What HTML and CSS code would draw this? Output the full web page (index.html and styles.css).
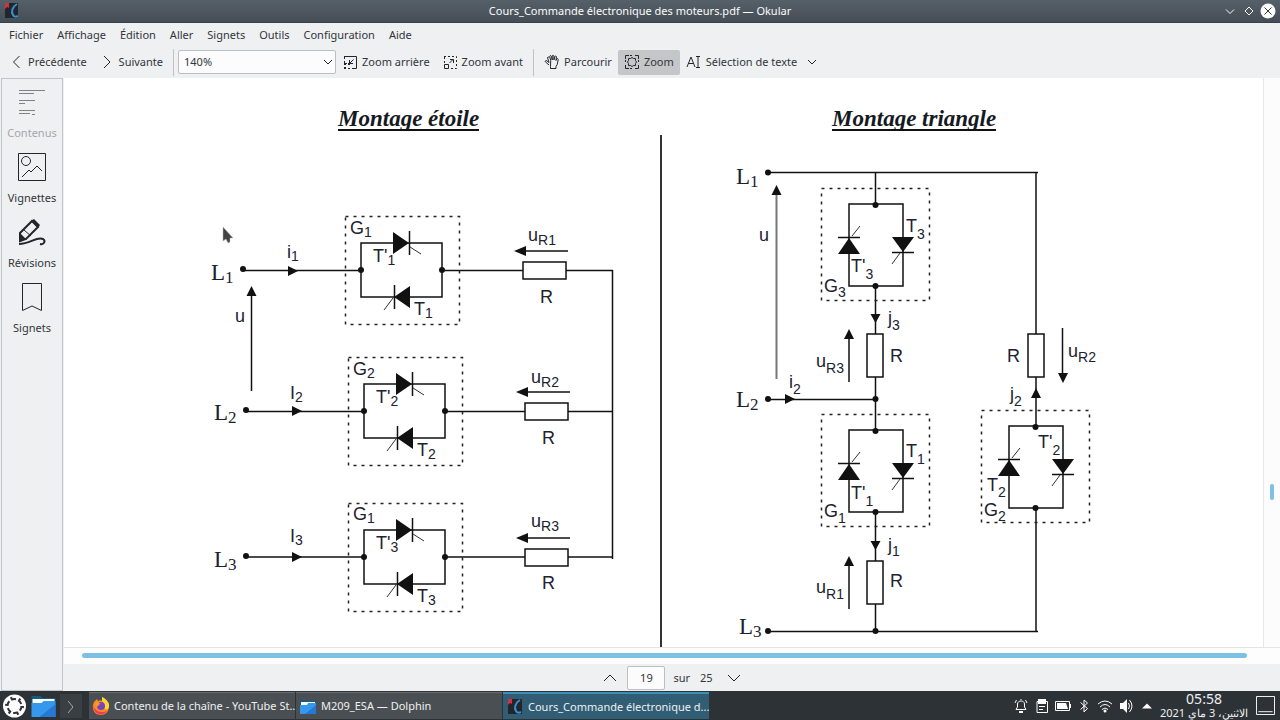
FILE: index.html
```html
<!DOCTYPE html>
<html lang="fr">
<head>
<meta charset="utf-8">
<title>Cours_Commande électronique des moteurs.pdf — Okular</title>
<link rel="stylesheet" href="styles.css">
</head>
<body>
<header class="titlebar">
  <svg class="app-icon" viewBox="0 0 16 16"><rect x="1" width="13" height="15" fill="#22262b"/><path d="M1 0h4v5L3 4 1 6z" fill="#d32f45"/><path d="M13 1c-5 3-6 8-4 11 1 2 3 2 5 1" fill="none" stroke="#3b8fd6" stroke-width="2"/></svg>
  <h1 class="window-title">Cours_Commande électronique des moteurs.pdf — Okular</h1>
  <div class="window-buttons">
    <button aria-label="Réduire"><svg viewBox="0 0 16 16"><path d="M4 6.500l4 4 4-4" class="light"/></svg></button>
    <button aria-label="Maximiser"><svg viewBox="0 0 16 16"><path d="M8 4l4 4-4 4-4-4z" class="light"/></svg></button>
    <button aria-label="Fermer"><svg viewBox="0 0 16 16"><circle cx="8" cy="8" r="7.500" fill="#fcfcfc"/><path d="M4.500 4.500l7 7m0-7l-7 7" class="dark"/></svg></button>
  </div>
</header>

<nav class="menubar">
  <button>Fichier</button><button>Affichage</button><button>Édition</button><button>Aller</button><button>Signets</button><button>Outils</button><button>Configuration</button><button>Aide</button>
</nav>

<div class="toolbar">
  <button class="tool"><svg viewBox="0 0 16 16"><path d="M11.500 2L5.500 8l6 6" class="line"/></svg>Précédente</button>
  <button class="tool"><svg viewBox="0 0 16 16"><path d="M5 2l6 6-6 6" class="line"/></svg>Suivante</button>
  <span class="separator"></span>
  <div class="zoom-field">
    <select aria-label="Niveau de zoom"><option>140%</option></select>
    <svg viewBox="0 0 10 10"><path d="M1 3l4 4 4-4" class="line"/></svg>
  </div>
  <button class="tool"><svg viewBox="0 0 16 16"><path d="M2 2.500h12.500v12H10" class="line"/><path d="M2.500 3v6M3 9.500h4M2 14.500h7" class="line dots"/><path d="M2 9h2v2H2zM6 9h2v2H6zM2 13h2v2H2z" fill="#232629"/><path d="M11.500 5.500L8 9M7.500 6v3.500H11" class="line"/></svg>Zoom arrière</button>
  <button class="tool"><svg viewBox="0 0 16 16"><path d="M2 2.500h12.500v12H8M2.500 3v6" class="line dots"/><path d="M2.500 10.500h4v4h-4zM7.500 9l3.500-3.500M8 5.500h3.500V9" class="line"/></svg>Zoom avant</button>
  <span class="separator"></span>
  <button class="tool"><svg viewBox="0 0 16 16"><path d="M5 11L1.500 8c-.8-1 .4-1.800 1.300-1.200L5 8.500 3.600 4c-.2-1.300 1.200-1.500 1.600-.4M6.700 6.500L5.700 2.600c0-1.200 1.500-1.300 1.800-.2l.7 3.600V2c.2-1 1.500-1 1.700 0v4l1-3.400c.4-1 1.600-.7 1.500.4L12 6.500l.7-1.500c.6-.9 1.700-.4 1.500.6l-1 5-1.200 1.900v2H6.500v-2z" class="line"/></svg>Parcourir</button>
  <button class="tool active"><svg viewBox="0 0 16 16"><path d="M1.500 5V1.500H5M11 1.500h3.500V5M14.500 11v3.500H11M5 14.500H1.500V11" class="line"/><path d="M1.500 6v4M14.500 6v4M6 1.500h4M6 14.500h4" class="line dots"/><path d="M4.500 4.500h2L8 3.500l1.500 1h2v2l1 1.500-1 1.500v2h-2L8 12.500l-1.500-1h-2v-2L3.500 8l1-1.500z" class="line"/></svg>Zoom</button>
  <button class="tool"><svg viewBox="0 0 16 16"><path d="M1 13L5 3l4 10M2.500 9.500h5M10 2.500h4M12 2.500v11M10 13.500h4" class="line"/></svg>Sélection de texte</button>
  <button class="drop" aria-label="Autres outils de sélection"><svg viewBox="0 0 10 10"><path d="M1 3l4 4 4-4" class="line"/></svg></button>
</div>

<main class="workspace">
  <aside class="sidebar">
    <button disabled><svg viewBox="0 0 32 32"><path d="M3 4.500h26M3 7.500h15M3 14.500h16M3 17.500h6M3 24.500h16M3 27.500h11M16 28.500h3" class="line muted"/></svg>Contenus</button>
    <button><svg viewBox="0 0 32 32"><path d="M2.500 2.500h27v27h-27zM6 26l7-7 2 2 6-6 5 5" class="line"/><circle cx="10" cy="10" r="4.500" class="line"/></svg>Vignettes</button>
    <button><svg viewBox="0 0 32 32"><path d="M4 25v-8L16 5l6 6-12 12z" fill="none" stroke="#232629" stroke-width="2"/><path d="M4 17l7 7H3zM15 5l3-2 6 6-2 3z" fill="#232629"/><path d="M8 14l7 6" class="line"/><path d="M3 28c11 0 18-8 24-5 3 2 1 6-3 5" fill="none" stroke="#232629" stroke-width="2"/></svg>Révisions</button>
    <button><svg viewBox="0 0 32 32"><path d="M6.500 2.500h19v27L16 25l-9.500 4.500z" class="line"/></svg>Signets</button>
  </aside>

  <section class="viewer">
    <div class="page-area">
      <svg class="diagram" viewBox="64 78 1199 569" preserveAspectRatio="xMidYMin meet" role="img" aria-label="Montages étoile et triangle">
        <defs>
          <g id="gate-h">
            <rect x=".5" y=".5" width="114" height="108" class="dash"/>
            <path d="M16 27H97V81H16z" class="wire"/>
            <circle cx="16" cy="54" r="3"/><circle cx="97" cy="54" r="3"/>
            <path d="M48 16V38L64 27zM65 70V92L49 81z"/>
            <path d="M64.500 15V39M49.500 69V93" class="wire"/>
            <path d="M65 31l11 7M48 82l-9 12" class="thin"/>
          </g>
          <g id="gate-v">
            <rect x=".5" y=".5" width="108" height="112" class="dash"/>
            <path d="M28 16H82V98H28z" class="wire"/>
            <circle cx="54.500" cy="17" r="3"/><circle cx="54.500" cy="98" r="3"/>
            <path d="M17 66H39L28 50zM71 49H93L82 64z"/>
            <path d="M17 49.500H39M71 64.500H93" class="wire"/>
            <path d="M31 48l8-10M79 65l-8 11" class="thin"/>
          </g>
          <g id="load-h">
            <rect x="9" y="21" width="43" height="17" class="box"/>
            <path d="M8 10H54" class="wire"/><path d="M0 10l12-5v10z"/>
          </g>
          <rect id="load-v" width="16" height="43" class="box"/>
          <path id="up" d="M0 0l5 10h-10z"/>
          <path id="right" d="M0 0l-10-5v10z"/>
        </defs>

        <text x="338" y="126" class="heading">Montage étoile</text>
        <text x="832" y="126" class="heading">Montage triangle</text>
        <path d="M338 130H479M832 130H996" class="rule"/>
        <path d="M661 135V647" class="divider"/>

        <path d="M243 270.500H361M442 270.500H523M566 270.500H613M246 411.500H364M445 411.500H525M568 411.500H613M246 557H364M445 557H525M568 557H613M612.500 270V559" class="wire"/>
        <circle cx="243" cy="269" r="3"/><circle cx="246" cy="410" r="3"/><circle cx="246" cy="556" r="3"/>
        <use href="#right" x="298" y="271"/><use href="#right" x="302" y="411"/><use href="#right" x="302" y="557"/>
        <path d="M251.500 391V294" class="wire"/><use href="#up" x="251.500" y="286"/>
        <use href="#gate-h" x="345" y="216"/><use href="#gate-h" x="348" y="357"/><use href="#gate-h" x="348" y="503"/>
        <use href="#load-h" x="514" y="241"/><use href="#load-h" x="516" y="382"/><use href="#load-h" x="516" y="528"/>

        <g class="node">
          <text x="211" y="280">L<tspan dy="3">1</tspan></text>
          <text x="214" y="420">L<tspan dy="3">2</tspan></text>
          <text x="214" y="567">L<tspan dy="3">3</tspan></text>
          <text x="736" y="184">L<tspan dy="3">1</tspan></text>
          <text x="736" y="407">L<tspan dy="3">2</tspan></text>
          <text x="739" y="634">L<tspan dy="3">3</tspan></text>
        </g>
        <g class="label">
          <text x="287" y="258">i<tspan dy="3">1</tspan></text>
          <text x="290" y="399">I<tspan dy="3">2</tspan></text>
          <text x="290" y="542">I<tspan dy="3">3</tspan></text>
          <text x="235" y="322">u</text>
          <text x="350" y="234">G<tspan dy="3">1</tspan></text>
          <text x="353" y="375">G<tspan dy="3">2</tspan></text>
          <text x="353" y="520">G<tspan dy="3">1</tspan></text>
          <text x="373" y="262">T'<tspan dy="3">1</tspan></text>
          <text x="376" y="403">T'<tspan dy="3">2</tspan></text>
          <text x="376" y="549">T'<tspan dy="3">3</tspan></text>
          <text x="414" y="315">T<tspan dy="3">1</tspan></text>
          <text x="417" y="456">T<tspan dy="3">2</tspan></text>
          <text x="417" y="602">T<tspan dy="3">3</tspan></text>
          <text x="528" y="241">u<tspan dy="4">R1</tspan></text>
          <text x="531" y="383">u<tspan dy="4">R2</tspan></text>
          <text x="531" y="527">u<tspan dy="4">R3</tspan></text>
          <text x="540" y="303">R</text><text x="542" y="444">R</text><text x="542" y="589">R</text>
        </g>

        <path d="M768 172.500H1038M875.500 172V205M875.500 286V334M875.500 377V431M875.500 512V561M875.500 604V631M768 399.500H876M768 631.500H1038M1036 172V334M1036 377V427M1036 507V631" class="wire"/>
        <circle cx="768" cy="172.500" r="3"/><circle cx="768" cy="399" r="3"/><circle cx="768" cy="631" r="3"/>
        <circle cx="875.500" cy="399" r="3"/><circle cx="875.500" cy="631" r="3"/>
        <path d="M776.500 379V194" class="soft"/><use href="#up" x="776.500" y="185"/>
        <use href="#right" x="795" y="399"/>
        <use href="#gate-v" x="821" y="188"/><use href="#gate-v" x="821" y="414"/><use href="#gate-v" x="981" y="410"/>
        <use href="#load-v" x="867" y="334"/><use href="#load-v" x="867" y="561"/><use href="#load-v" x="1028" y="334"/>
        <path d="M849 382V338M849 609V565M1062.500 328V374" class="wire"/>
        <use href="#up" x="849" y="329"/><use href="#up" x="849" y="556"/><use href="#up" x="1036" y="388"/>
        <path d="M1063 383l5-10h-10zM875.500 323l5-9h-10zM875.500 550l5-9h-10z"/>
        <g class="label">
          <text x="759" y="241">u</text>
          <text x="906" y="232">T<tspan dy="7">3</tspan></text>
          <text x="851" y="272">T'<tspan dy="7">3</tspan></text>
          <text x="824" y="292">G<tspan dy="5">3</tspan></text>
          <text x="888" y="324">j<tspan dy="6">3</tspan></text>
          <text x="890" y="362">R</text>
          <text x="816" y="367">u<tspan dy="6">R3</tspan></text>
          <text x="789" y="388">i<tspan dy="6">2</tspan></text>
          <text x="906" y="457">T<tspan dy="7">1</tspan></text>
          <text x="851" y="499">T'<tspan dy="7">1</tspan></text>
          <text x="824" y="517">G<tspan dy="6">1</tspan></text>
          <text x="888" y="551">j<tspan dy="5">1</tspan></text>
          <text x="890" y="587">R</text>
          <text x="816" y="593">u<tspan dy="6">R1</tspan></text>
          <text x="1007" y="362">R</text>
          <text x="1068" y="357">u<tspan dy="5">R2</tspan></text>
          <text x="1010" y="400">j<tspan dy="6">2</tspan></text>
          <text x="1038" y="448">T'<tspan dy="7">2</tspan></text>
          <text x="987" y="491">T<tspan dy="6">2</tspan></text>
          <text x="984" y="516">G<tspan dy="5">2</tspan></text>
        </g>
        <path d="M223 227v14l3-2 2 4 2-1v-4h3z" fill="#444" stroke="#bbb" stroke-width=".5"/>
      </svg>
      <div class="v-scroll"><span class="v-thumb"></span></div>
    </div>
    <div class="h-scroll"><span class="h-thumb"></span></div>
    <div class="pagebar">
      <button aria-label="Page précédente"><svg viewBox="0 0 14 14"><path d="M1 10l6-6 6 6" class="line"/></svg></button>
      <input type="text" value="19" aria-label="Page">
      <span>sur</span>
      <span class="total">25</span>
      <button aria-label="Page suivante"><svg viewBox="0 0 14 14"><path d="M1 4l6 6 6-6" class="line"/></svg></button>
    </div>
  </section>
</main>

<footer class="taskbar">
  <button class="launcher" aria-label="Menu des applications"><svg viewBox="0 0 24 24"><circle cx="12" cy="12" r="11.500" fill="#fcfcfc"/><circle cx="12" cy="12" r="7" fill="none" stroke="#2d3236" stroke-width="2" stroke-dasharray="5 2.330"/><circle cx="12" cy="12" r="8.500" fill="none" stroke="#2d3236" stroke-width="2" stroke-dasharray="2 6.900"/></svg></button>
  <button class="launcher" aria-label="Fichiers"><svg viewBox="0 0 24 24"><path d="M0 2h9l2 2h13v8H0z" fill="#145a83"/><path d="M1 5h22v7H1z" fill="#fff"/><path d="M0 9h10l2-2h12v16H0z" fill="#3698ec"/><path d="M24 10v13H8z" fill="#2778d2"/></svg></button>
  <button class="expander" aria-label="Plus de lanceurs"><svg viewBox="0 0 16 16"><path d="M5 3l5 6-5 6" class="light"/></svg></button>
  <div class="tasks">
    <button class="task"><svg viewBox="0 0 18 18"><path d="M2 5l3-3 1 2c2-1 3-1 4 0V0c4 2 7 5 7 9 0 5-3 9-8 9-6 0-9-5-8-10z" fill="#ff8a20"/><path d="M10 0c4 2 8 6 7 10-1 3-3 3-5 1 1-4-1-6-2-7z" fill="#ffd33b"/><path d="M1 8c2 7 8 8 14 6-3 5-13 6-14-6z" fill="#ef3b5c"/><circle cx="9" cy="9" r="4" fill="#7742bd"/><path d="M3 6c3-1 4 0 6 1-2 0-3 1-3 3z" fill="#ff9b22"/></svg><span>Contenu de la chaîne - YouTube St...</span></button>
    <button class="task"><svg viewBox="0 0 18 18"><path d="M1 3h7l1 1h8v5H1z" fill="#145a83"/><path d="M2 5h14v5H2z" fill="#fff"/><path d="M1 8h7l1-2h8v11H1z" fill="#3698ec"/><path d="M17 8v9H6z" fill="#2778d2"/></svg><span>M209_ESA — Dolphin</span></button>
    <button class="task current"><svg viewBox="0 0 18 18"><rect x="2" y="1" width="14" height="15" fill="#22262b"/><path d="M2 1h4v5L4 5 2 7z" fill="#d32f45"/><path d="M14 2c-5 3-6 8-4 11 1 2 3 2 5 1" fill="none" stroke="#3b8fd6" stroke-width="2"/></svg><span>Cours_Commande électronique d...</span></button>
  </div>
  <div class="tray">
    <button aria-label="Notifications"><svg viewBox="0 0 16 16"><path d="M3 11.500h10L11.500 9V6c0-4-7-4-7 0v3zM3.500 2L2 5M12.500 2L14 5M8 2V1" class="light"/><path d="M6 13h4v2H6z" fill="#fcfcfc"/></svg></button>
    <button aria-label="Presse-papiers"><svg viewBox="0 0 16 16"><path d="M3 3.500h10.500v11H3zM5 8.500h6M5 11.500h4" class="light"/><path d="M4 1h8v5H4z" fill="#fcfcfc"/></svg></button>
    <button aria-label="Batterie"><svg viewBox="0 0 16 16"><path d="M.5 3.500h14v9H.5z" class="light"/><path d="M2 5h9l2 6H2zM15 6h1v4h-1z" fill="#fcfcfc"/></svg></button>
    <button aria-label="Bluetooth"><svg viewBox="0 0 16 16"><path d="M4.500 4.500l7 6L8 14V2l3.500 3-7 6.500" class="light"/></svg></button>
    <button aria-label="Réseau"><svg viewBox="0 0 16 16"><path d="M1 6q7-6 14 0M3 9q5-5 10 0M5 11.500q3-3 6 0" class="light"/><circle cx="8" cy="13" r="1.500" fill="#fcfcfc"/></svg></button>
    <button aria-label="Volume"><svg viewBox="0 0 16 16"><path d="M2 5h3l4-4v14l-4-4H2z" fill="#fcfcfc"/><path d="M10.500 5q2 3 0 6M11.500 2q5 6 0 12" class="light"/></svg></button>
    <button aria-label="Éléments cachés"><svg viewBox="0 0 16 16"><path d="M3 10.500l5-5 5 5z" fill="#fcfcfc"/></svg></button>
  </div>
  <div class="clock" dir="rtl" lang="ar"><time class="hour">05:58</time><span class="date">الاثنين، 3 ماي 2021</span></div>
  <button class="desktop" aria-label="Afficher le bureau"><svg viewBox="0 0 20 20"><path d="M.5.500h19v19H.5zM2.500 16.500h15" class="light"/></svg></button>
</footer>
</body>
</html>
```
FILE: styles.css
```css
* { box-sizing: border-box; }
body {
  margin: 0;
  height: 100vh;
  display: flex;
  flex-direction: column;
  overflow: hidden;
  background: #eff0f1;
  color: #31363b;
  font: 11px/16px "Noto Sans", sans-serif;
}
button {
  border: 0;
  padding: 0;
  margin: 0;
  background: none;
  color: inherit;
  font: inherit;
  white-space: nowrap;
}
svg { display: block; flex: none; }
.line { fill: none; stroke: #232629; stroke-width: 1; }
.muted { stroke: #808385; stroke-width: 1; }
.dots { stroke-dasharray: 2 2; }
.light { fill: none; stroke: #fcfcfc; stroke-width: 1; }
.dark { fill: none; stroke: #31363b; stroke-width: 1; }

.titlebar {
  height: 23px;
  flex: none;
  display: grid;
  grid-template-columns: 1fr auto 1fr;
  align-items: center;
  padding: 0 4px;
  background: linear-gradient(#566068, #454e56);
  border-bottom: 1px solid #3a4249;
  color: #fcfcfc;
}
.app-icon { width: 16px; height: 16px; }
.window-title { margin: 0; font-size: 11px; font-weight: 400; }
.window-buttons { display: flex; justify-content: flex-end; gap: 3px; }
.window-buttons svg { width: 16px; height: 16px; }

.menubar {
  height: 25px;
  flex: none;
  display: flex;
  align-items: center;
  gap: 14px;
  padding: 0 9px 2px;
}
.toolbar {
  height: 30px;
  flex: none;
  display: flex;
  align-items: center;
  padding: 0 2px 2px;
}
.tool {
  height: 25px;
  display: flex;
  align-items: center;
  gap: 4px;
  padding: 0 6px;
  border-radius: 2px;
}
.tool svg { width: 16px; height: 16px; }
.tool.active { background: #c4c6c7; }
.separator { width: 1px; height: 27px; margin: 0 4px; background: #bfc1c2; }
.zoom-field { display: grid; width: 158px; align-items: center; }
.zoom-field > * { grid-area: 1 / 1; }
.zoom-field select {
  appearance: none;
  width: 100%;
  height: 24px;
  padding: 0 5px;
  border: 1px solid #bcbebf;
  border-radius: 2px;
  background: #fcfcfc;
  color: inherit;
  font: inherit;
}
.zoom-field svg { justify-self: end; width: 10px; height: 10px; margin-right: 3px; pointer-events: none; }
.drop { padding: 0 4px; }
.drop svg { width: 10px; height: 10px; }

.workspace { flex: 1; min-height: 0; display: flex; }
.sidebar {
  width: 62px;
  flex: none;
  margin: 0 1px;
  padding-top: 1px;
  border: 1px solid #bfc5c9;
  display: flex;
  flex-direction: column;
}
.sidebar button {
  height: 65px;
  display: flex;
  flex-direction: column;
  align-items: center;
  gap: 7px;
  padding-top: 6px;
}
.sidebar button:disabled { color: #a5a8aa; }
.sidebar svg { width: 32px; height: 32px; }

.viewer { flex: 1; min-width: 0; display: flex; flex-direction: column; }
.page-area { flex: 1; min-height: 0; display: flex; background: #fff; }
.diagram { flex: 1; min-width: 0; height: 100%; fill: #111; }
.v-scroll {
  width: 17px;
  flex: none;
  display: flex;
  flex-direction: column;
  align-items: center;
  padding-top: 406px;
  border-left: 1px solid #e6e7e8;
  background: #fcfcfc;
}
.v-thumb { width: 4px; height: 16px; border-radius: 2px; background: #7cc0e4; }
.h-scroll { height: 17px; flex: none; padding: 5px 33px 0 18px; border-top: 1px solid #e3e4e5; background: #fdfdfd; }
.h-thumb { display: block; height: 5px; border-radius: 3px; background: #7cc0e4; }
.pagebar {
  height: 27px;
  flex: none;
  display: flex;
  align-items: center;
  justify-content: center;
  gap: 10px;
}
.pagebar svg { width: 14px; height: 14px; }
.pagebar button + input { margin-right: -2px; }
.pagebar .total { margin-right: 4px; }
.pagebar input {
  width: 38px;
  height: 24px;
  padding: 0;
  border: 1px solid #bcbebf;
  border-radius: 2px;
  background: #fcfcfc;
  color: inherit;
  font: inherit;
  text-align: center;
}

.heading { font: italic 700 23px "Liberation Serif", serif; fill: #151a22; }
.node { font: 23px "Liberation Serif", serif; fill: #1b2130; }
.node tspan { font-size: 17px; }
.label { font: 18px "Liberation Sans", sans-serif; fill: #20222f; }
.label tspan { font-size: 14px; }
.wire { fill: none; stroke: #111; stroke-width: 1.5; }
.thin { fill: none; stroke: #333; stroke-width: 1; }
.soft { fill: none; stroke: #777; stroke-width: 2; }
.box { fill: #fff; stroke: #111; stroke-width: 1.5; }
.dash { fill: none; stroke: #222; stroke-width: 1.5; stroke-dasharray: 3 5; }
.rule { stroke: #111; stroke-width: 2; }
.divider { stroke: #333; stroke-width: 2; }

.taskbar {
  height: 29px;
  flex: none;
  display: flex;
  align-items: center;
  padding: 0 5px 0 2px;
  background: #2d3236;
  color: #eff0f1;
}
.launcher { margin-right: 4px; }
.launcher svg { width: 25px; height: 24px; }
.expander { width: 22px; height: 24px; margin-right: 7px; padding: 3px; background: #3a3f43; }
.expander svg { width: 16px; height: 16px; }
.expander .light { stroke: #a5a8aa; }
.tasks { flex: 1; min-width: 0; display: flex; gap: 1px; }
.task {
  width: 206px;
  height: 27px;
  display: flex;
  align-items: center;
  gap: 4px;
  padding: 0 3px;
  border-top: 1px solid #686d71;
  background: #4a4f53;
}
.task svg { width: 18px; height: 18px; }
.task.current { border-top: 2px solid #3d8fb8; background: #315d75; }
.tray { display: flex; gap: 5px; margin-right: 4px; }
.tray svg { width: 16px; height: 16px; }
.clock { width: 90px; display: flex; flex-direction: column; align-items: center; margin-right: 7px; white-space: nowrap; }
.hour { font-size: 14px; line-height: 15px; }
.date { font-size: 11px; line-height: 14px; }
.desktop svg { width: 19px; height: 19px; }
```
